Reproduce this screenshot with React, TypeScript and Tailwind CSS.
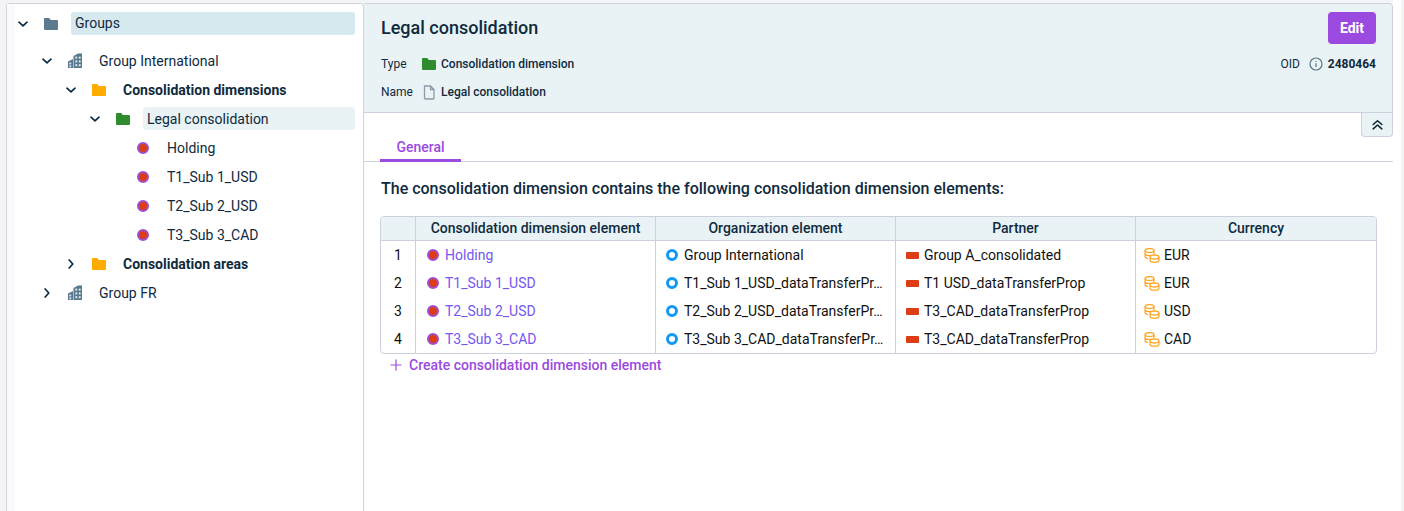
import React from "react";

const dark = "text-[#0f2a3d]";

function Chevron({ open, className = "" }: { open: boolean; className?: string }) {
  return (
    <svg width="10" height="10" viewBox="0 0 10 10" fill="none" stroke="#0b2a45" strokeWidth="1.7" strokeLinecap="round" strokeLinejoin="round" className={className}>
      {open ? <path d="M1 3.2 L5 6.8 L9 3.2" /> : <path d="M3.2 1 L6.8 5 L3.2 9" />}
    </svg>
  );
}

function Folder({ color, size = 14 }: { color: string; size?: number }) {
  return (
    <svg width={size} height={(size * 12) / 14} viewBox="0 0 14 12" fill={color} className="shrink-0">
      <path d="M0.8 0 H5.2 L6.8 2 H13 a1 1 0 0 1 1 1 V11 a1 1 0 0 1 -1 1 H1 a1 1 0 0 1 -1 -1 V0.8 a0.8 0.8 0 0 1 0.8 -0.8 Z" />
    </svg>
  );
}

function Building() {
  return (
    <svg width="14" height="15" viewBox="0 0 14 15" className="shrink-0">
      <path fill="#5a7a90" d="M5.5 3 L10 0.5 H14 V15 H5.5 Z M0 8.5 L5 6 V15 H0 Z" />
      <g fill="#e6eef2">
        <rect x="7.4" y="3.6" width="1.8" height="2" />
        <rect x="10.8" y="3.6" width="1.8" height="2" />
        <rect x="7.4" y="7.4" width="1.8" height="2" />
        <rect x="10.8" y="7.4" width="1.8" height="2" />
        <rect x="7.4" y="11.2" width="1.8" height="2" />
        <rect x="10.8" y="11.2" width="1.8" height="2" />
        <rect x="1.4" y="9.6" width="1.8" height="1.8" />
        <rect x="1.4" y="12.4" width="1.8" height="1.8" />
      </g>
    </svg>
  );
}

function Dot() {
  return <span className="block w-3 h-3 rounded-full bg-[#dc3d16] border-2 border-[#9b4fd6] shrink-0" />;
}

function Ring() {
  return <span className="block w-3 h-3 rounded-full bg-white border-[3px] border-[#1199f5] shrink-0" />;
}

function Bar() {
  return <span className="block w-[13px] h-[7px] rounded-[1px] bg-[#dc3d16] shrink-0" />;
}

function Coins() {
  return (
    <svg width="16" height="15" viewBox="0 0 16 15" fill="none" stroke="#ffa726" strokeWidth="1.3" className="shrink-0">
      <ellipse cx="5.5" cy="2.6" rx="4.4" ry="2" />
      <path d="M1.1 2.6 V8.6 C1.1 9.6 2.4 10.4 4 10.6 M9.9 2.6 V6 M1.1 5.6 C1.1 6.7 3 7.6 5.5 7.6 C6 7.6 6.6 7.6 7 7.5" />
      <ellipse cx="10.5" cy="9" rx="4.4" ry="2" />
      <path d="M6.1 9 V12.2 C6.1 13.3 8 14.2 10.5 14.2 C13 14.2 14.9 13.3 14.9 12.2 V9" />
    </svg>
  );
}

function TreeRow({ indent, chevron, icon, label, bold, selected, iconWidth = 24 }: { indent: number; chevron?: "open" | "closed"; icon: React.ReactNode; label: string; bold?: boolean; selected?: string; iconWidth?: number }) {
  return (
    <div className="flex items-center h-[29px] relative" style={{ paddingLeft: indent }}>
      <div className="w-[24px] pl-[1px] flex justify-start shrink-0">{chevron && <Chevron open={chevron === "open"} />}</div>
      <div className="flex shrink-0 pl-[3px]" style={{ width: iconWidth }}>{icon}</div>
      <div className={`flex-1 h-[23px] flex items-center pl-1 rounded-[3px] text-sm ${dark} ${bold ? "font-bold" : ""} ${selected ?? ""}`}>
        {label}
      </div>
    </div>
  );
}

const rows = [
  ["1", "Holding", "Group International", "Group A_consolidated", "EUR"],
  ["2", "T1_Sub 1_USD", "T1_Sub 1_USD_dataTransferPr…", "T1 USD_dataTransferProp", "EUR"],
  ["3", "T2_Sub 2_USD", "T2_Sub 2_USD_dataTransferPr…", "T3_CAD_dataTransferProp", "USD"],
  ["4", "T3_Sub 3_CAD", "T3_Sub 3_CAD_dataTransferPr…", "T3_CAD_dataTransferProp", "CAD"],
];

const grid = "grid grid-cols-[35px_240px_240px_240px_240px]";

export default function App() {
  return (
    <div className="w-[1404px] h-[511px] overflow-hidden flex bg-[#f4f4f7] font-['Roboto',sans-serif]">
      <div className="w-[6px] shrink-0" />
      <aside className="w-[358px] shrink-0 mt-[3px] bg-white border-t border-l border-r border-[#d3d3e0] rounded-t-[4px] flex">
        <div className="w-[8px] shrink-0 bg-[#fafafc]" />
        <div className="flex-1 pl-[2px] pr-[8px] pt-[8px]">
          <div className="flex items-center h-[23px] relative mb-[11px]">
            <div className="w-[24px] pl-[1px] shrink-0"><Chevron open /></div>
            <div className="w-[30px] pl-[3px] flex shrink-0"><Folder color="#5b7a90" /></div>
            <div className={`flex-1 h-[23px] flex items-center pl-1 pb-[2px] rounded-[3px] text-sm bg-[#d6e9ef] ${dark}`}>Groups</div>
          </div>
          <TreeRow indent={24} chevron="open" icon={<Building />} label="Group International" iconWidth={30} />
          <TreeRow indent={48} chevron="open" icon={<Folder color="#ffab00" />} label="Consolidation dimensions" bold iconWidth={30} />
          <TreeRow indent={72} chevron="open" icon={<Folder color="#2e8b2e" />} label="Legal consolidation" selected="bg-[#e9f3f6]" iconWidth={30} />
          {rows.map((r) => (
            <TreeRow key={r[0]} indent={96} icon={<span className="-ml-[3px]"><Dot /></span>} label={r[1]} iconWidth={26} />
          ))}
          <TreeRow indent={48} chevron="closed" icon={<Folder color="#ffab00" />} label="Consolidation areas" bold iconWidth={30} />
          <TreeRow indent={24} chevron="closed" icon={<Building />} label="Group FR" iconWidth={30} />
        </div>
      </aside>

      <main className="w-[1029px] shrink-0 mt-[3px] bg-white relative">
        <header className="h-[110px] bg-[#e9f3f6] border-t border-b border-r border-[#cfd0de] rounded-tr-[4px] pl-[17px] pr-[16px] pt-[8px]">
          <div className="flex justify-between items-start">
            <h1 className={`text-[18px] leading-[32px] mb-[1px] font-medium ${dark}`}>Legal consolidation</h1>
            <button className="w-[48px] h-[32px] rounded-[4px] bg-[#9a4adf] text-white text-sm font-bold">Edit</button>
          </div>
          <div className="flex justify-between mt-[5px] h-[28px] items-center text-xs">
            <div className="flex items-center">
              <span className={`w-[41px] ${dark}`}>Type</span>
              <Folder color="#2e8b2e" />
              <span className={`ml-[5px] font-medium ${dark}`}>Consolidation dimension</span>
            </div>
            <div className="flex items-center">
              <span className={dark}>OID</span>
              <svg width="14" height="14" viewBox="0 0 14 14" fill="none" stroke="#5d7687" strokeWidth="1.2" className="ml-[9px]">
                <circle cx="7" cy="7" r="6" />
                <path d="M7 6.2 V10 M7 4 V4.9" />
              </svg>
              <span className={`ml-[5px] font-bold ${dark}`}>2480464</span>
            </div>
          </div>
          <div className="flex items-center h-[28px] text-xs">
            <span className={`w-[41px] ${dark}`}>Name</span>
            <svg width="14" height="15" viewBox="0 0 14 15" fill="none" stroke="#8b9aa6" strokeWidth="1.3">
              <path d="M2.5 1 H8.5 L12 4.5 V13 a1 1 0 0 1 -1 1 H3.5 a1 1 0 0 1 -1 -1 V1 Z M8.5 1 V4.5 H12" />
            </svg>
            <span className={`ml-[5px] font-medium ${dark}`}>Legal consolidation</span>
          </div>
        </header>

        <button className="absolute right-[0px] top-[110px] w-[32px] h-[24px] bg-[#e9f3f6] border border-t-0 border-[#cfd0de] rounded-b-[4px] flex items-center justify-center">
          <svg width="13" height="13" viewBox="0 0 12 12" fill="none" stroke="#0b2233" strokeWidth="1.4" strokeLinecap="round" strokeLinejoin="round">
            <path d="M2 6 L6 2.5 L10 6 M2 10 L6 6.5 L10 10" />
          </svg>
        </button>

        <div className="pl-[16px] mt-[20px] border-b border-[#d3d3e0] h-[29px] flex">
          <div className="w-[81px] h-[29px] border-b-[3px] border-[#9a4adf] text-center text-sm font-medium text-[#9a4adf] leading-[28px]">General</div>
        </div>

        <p className={`ml-[17px] mt-[17px] text-[16px] leading-[20px] font-medium ${dark}`}>The consolidation dimension contains the following consolidation dimension elements:</p>

        <div className="ml-[16px] mt-[17px] w-[997px] border border-[#cfd0de] rounded-[4px] overflow-hidden text-sm">
          <div className={`${grid} h-[24px] bg-[#e9f3f6] border-b border-[#cfd0de] font-medium ${dark}`}>
            <div className="border-r border-[#cfd0de]" />
            <div className="border-r border-[#cfd0de] flex items-center justify-center pb-[2px]">Consolidation dimension element</div>
            <div className="border-r border-[#cfd0de] flex items-center justify-center pb-[2px]">Organization element</div>
            <div className="border-r border-[#cfd0de] flex items-center justify-center pb-[2px]">Partner</div>
            <div className="flex items-center justify-center pb-[2px]">Currency</div>
          </div>
          {rows.map((r) => (
            <div key={r[0]} className={`${grid} h-[28px] text-[#111]`}>
              <div className="border-r border-[#cfd0de] flex items-center justify-center">{r[0]}</div>
              <div className="border-r border-[#cfd0de] flex items-center gap-[6px] pl-[11px] text-[#7358f0]"><Dot />{r[1]}</div>
              <div className="border-r border-[#cfd0de] flex items-center gap-[6px] pl-[10px] min-w-0"><Ring /><span className="whitespace-nowrap">{r[2]}</span></div>
              <div className="border-r border-[#cfd0de] flex items-center gap-[5px] pl-[10px]"><Bar />{r[3]}</div>
              <div className="flex items-center gap-[4px] pl-[8px]"><Coins />{r[4]}</div>
            </div>
          ))}
        </div>

        <div className="ml-[26px] mt-[1px] h-[20px] flex items-center gap-[7px] text-sm font-medium text-[#9a4adf]">
          <svg width="12" height="12" viewBox="0 0 12 12" stroke="#9a4adf" strokeWidth="1.2"><path d="M6 0.5 V11.5 M0.5 6 H11.5" /></svg>
          Create consolidation dimension element
        </div>
      </main>
      <div className="w-[8px] shrink-0 bg-white" />
      <div className="flex-1 bg-[#f4f4f7]" />
    </div>
  );
}
